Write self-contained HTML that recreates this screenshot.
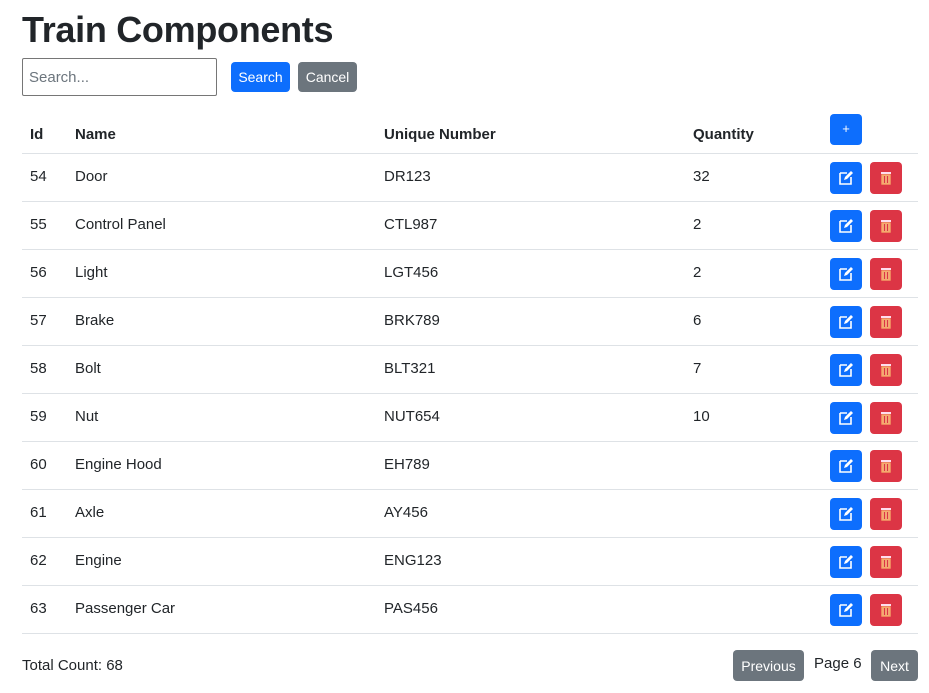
<!DOCTYPE html>
<html><head><meta charset="utf-8"><style>
*{box-sizing:border-box;margin:0;padding:0}
body{width:929px;height:693px;background:#fff;font-family:"Liberation Sans",sans-serif;color:#212529;position:relative;overflow:hidden;font-size:15px}
.a{position:absolute;white-space:nowrap}
h1{position:absolute;left:22px;top:9px;font-size:36px;font-weight:bold;letter-spacing:-0.3px}
.inp{position:absolute;left:22px;top:58px;width:195px;height:38px;border:1px solid #767676;border-radius:2px;color:#6c757d;padding:10px 6px;font-size:15px}
.btn{position:absolute;border-radius:4px;color:#fff;font-size:14px;text-align:center}
.p{background:#0d6efd}.g{background:#6c757d}.r{background:#dc3545}
.line{position:absolute;left:22px;width:896px;height:1px;background:#dee2e6}
.th{font-weight:bold;top:126px}
.ic{width:32px;height:32px}
.ic svg{position:absolute;left:8px;top:8px}
</style></head><body>
<h1>Train Components</h1>
<div class="inp">Search...</div>
<div class="btn p" style="left:231px;top:62px;width:59px;height:30px;line-height:30px">Search</div>
<div class="btn g" style="left:298px;top:62px;width:59px;height:30px;line-height:30px">Cancel</div>

<div class="a th" style="left:30px">Id</div>
<div class="a th" style="left:75px">Name</div>
<div class="a th" style="left:384px">Unique Number</div>
<div class="a th" style="left:693px">Quantity</div>
<div class="btn p" style="left:830px;top:114px;width:32px;height:31px;line-height:30px;font-size:13px">+</div>
<div class="line" style="top:153px"></div>

<div id="rows"></div>
<script>
var d=[["54","Door","DR123","32"],["55","Control Panel","CTL987","2"],["56","Light","LGT456","2"],["57","Brake","BRK789","6"],["58","Bolt","BLT321","7"],["59","Nut","NUT654","10"],["60","Engine Hood","EH789",""],["61","Axle","AY456",""],["62","Engine","ENG123",""],["63","Passenger Car","PAS456",""]];
var h="";
var ed='<svg width="16" height="16" viewBox="0 0 16 16"><path d="M2 3h7M2 3v11h11V7" fill="none" stroke="#fff" stroke-width="1.6"/><path d="M6 10l1-3 6-6 2 2-6 6z" fill="#fff"/></svg>';
var tr='<svg width="16" height="16" viewBox="0 0 16 16"><rect x="3" y="2" width="10" height="2" fill="#fde"/><rect x="4" y="5" width="8" height="9" fill="#f6b27a" stroke="#f5a86a" stroke-width="1.4"/><path d="M6.5 6v7M9.5 6v7" stroke="#dc3545" stroke-width="1.2"/></svg>';
d.forEach(function(r,i){var y=154+i*48;
h+='<div class="a" style="left:30px;top:'+(y+14)+'px">'+r[0]+'</div>';
h+='<div class="a" style="left:75px;top:'+(y+14)+'px">'+r[1]+'</div>';
h+='<div class="a" style="left:384px;top:'+(y+14)+'px">'+r[2]+'</div>';
h+='<div class="a" style="left:693px;top:'+(y+14)+'px">'+r[3]+'</div>';
h+='<div class="btn p ic" style="left:830px;top:'+(y+8)+'px">'+ed+'</div>';
h+='<div class="btn r ic" style="left:870px;top:'+(y+8)+'px">'+tr+'</div>';
h+='<div class="line" style="top:'+(y+47)+'px"></div>';});
document.getElementById("rows").innerHTML=h;
</script>
<div class="a" style="left:22px;top:657px">Total Count: 68</div>
<div class="btn g" style="left:733px;top:650px;width:71px;height:31px;line-height:32px">Previous</div>
<div class="a" style="left:814px;top:655px">Page 6</div>
<div class="btn g" style="left:871px;top:650px;width:47px;height:31px;line-height:32px">Next</div>
</body></html>
